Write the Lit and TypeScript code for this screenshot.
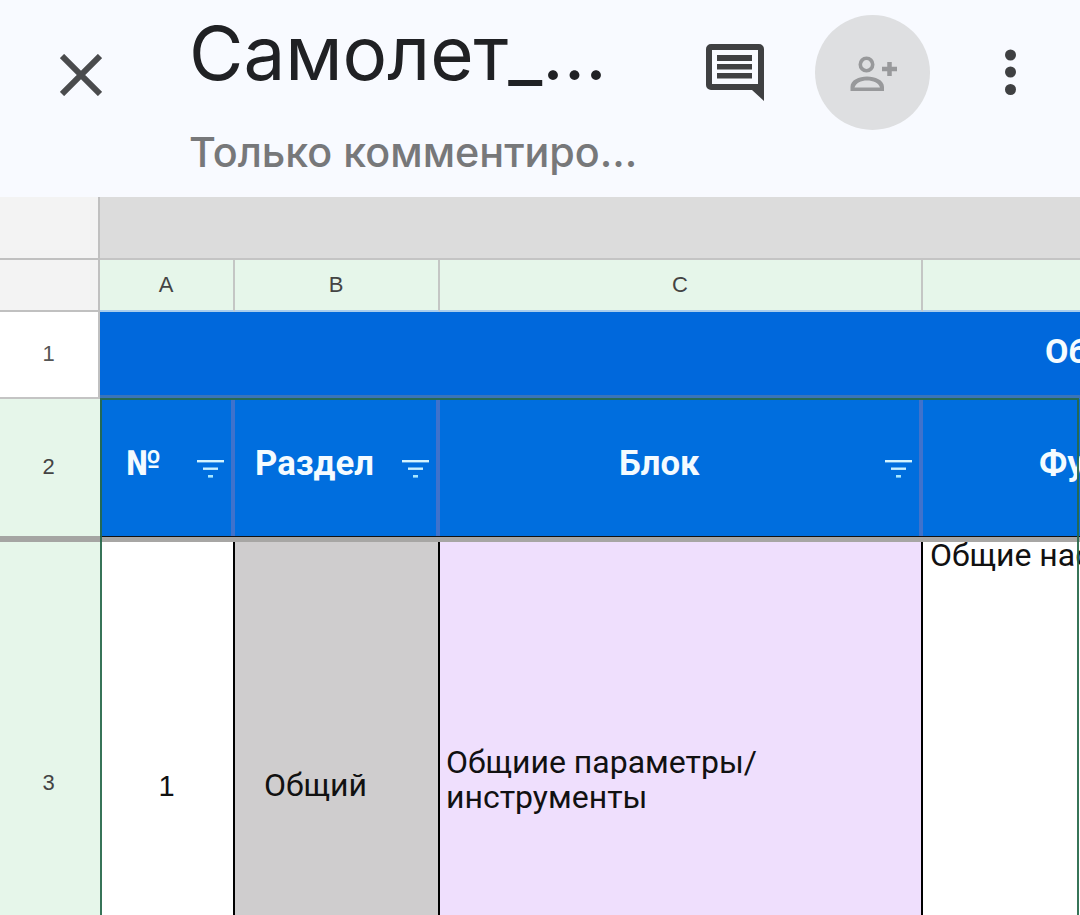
import { LitElement, html, css } from "lit";
import { customElement } from "lit/decorators.js";

const filterIcon = html`<svg class="filter" width="28" height="20" viewBox="0 0 28 20" aria-hidden="true">
  <rect x="0" y="0" width="27" height="2.4" fill="#d4f4ff"></rect>
  <rect x="6" y="7.5" width="15" height="2.4" fill="#c8f0ff"></rect>
  <rect x="11" y="15" width="5" height="2.6" fill="#a6e6ff"></rect>
</svg>`;

@customElement("app-root")
export class AppRoot extends LitElement {
  static styles = css`
    :host {
      display: block;
      width: 1080px;
      height: 915px;
      overflow: hidden;
      background: #fff;
      font-family: Roboto, "Liberation Sans", sans-serif;
    }
    .top {
      height: 197px;
      background: #f8faff;
      display: flex;
      align-items: flex-start;
      box-sizing: border-box;
    }
    .close {
      margin: 54px 0 0 60px;
      width: 42px;
      height: 42px;
      flex: none;
    }
    .titles {
      margin-left: 87px;
      width: 491px;
      flex: none;
    }
    .title {
      margin-top: 3px;
      font-family: Inter, Roboto, sans-serif;
      font-size: 74.5px;
      line-height: 100px;
      color: #202124;
      white-space: nowrap;
      font-weight: 400;
      height: 100px;
    }
    .sub {
      margin-top: 24px;
      font-family: Inter, Roboto, sans-serif;
      font-size: 41.3px;
      line-height: 50px;
      color: #77787a;
      white-space: nowrap;
      font-weight: 500;
    }
    .comment {
      margin: 44px 0 0 26px;
      flex: none;
    }
    .avatar {
      margin: 15px 0 0 51px;
      width: 115px;
      height: 115px;
      border-radius: 50%;
      background: #dedfe1;
      display: flex;
      align-items: center;
      justify-content: center;
      flex: none;
    }
    .more {
      margin: 49px 0 0 74px;
      flex: none;
    }
    .sheet {
      position: relative;
      display: grid;
      grid-template-columns: 100px 135px 205px 483px 157px;
      grid-template-rows: 63px 52px 87px 137px 6px 373px;
      overflow: hidden;
    }
    .corner {
      background: #f3f3f3;
      border-right: 2px solid #c0c0c0;
      border-bottom: 2px solid #c0c0c0;
      box-sizing: border-box;
    }
    .band {
      grid-column: 2 / -1;
      background: #dcdcdc;
      border-bottom: 2px solid #c4c4c4;
      box-sizing: border-box;
    }
    .col {
      background: #e6f6ea;
      border-right: 2px solid #c4c6c4;
      border-bottom: 2px solid #a9cdec;
      box-sizing: border-box;
      display: flex;
      align-items: center;
      justify-content: center;
      font-family: "Liberation Sans", Arial, sans-serif;
      font-size: 22px;
      color: #444;
      padding-right: 1px;
    }
    .col.last {
      border-right: 0;
    }
    .rowh {
      display: flex;
      align-items: center;
      justify-content: center;
      font-family: "Liberation Sans", Arial, sans-serif;
      font-size: 22px;
      color: #444;
      box-sizing: border-box;
      background: #e6f6ea;
      padding: 0 3px 2px 0;
    }
    .rowh.one {
      background: #fff;
      border-bottom: 2px solid #c4c4c4;
      border-right: 2px solid #c0c0c0;
      padding: 0 1px 2px 0;
      color: #555;
    }
    .rowh.three {
      align-items: flex-start;
      padding-top: 228px;
    }
    .banner {
      grid-column: 2 / -1;
      background: #0068dc;
      border-bottom: 4px solid #3a74b8;
      box-sizing: border-box;
      color: #f4fbff;
      font-size: 34px;
      font-weight: 700;
      line-height: 78px;
      padding-left: 945px;
      white-space: nowrap;
      overflow: hidden;
    }
    .hcell {
      background: #006ede;
      border-right: 4px solid #3f72cc;
      box-sizing: border-box;
      position: relative;
      color: #f4fbff;
      font-family: Roboto, "Liberation Sans", sans-serif;
      font-weight: 700;
      font-size: 34.7px;
      line-height: 40px;
      white-space: nowrap;
      overflow: hidden;
      padding-top: 44px;
    }
    .hcell.last {
      border-right: 0;
    }
    .hcell .filter {
      position: absolute;
      top: 61px;
      right: 6px;
    }
    .pad-a { padding-left: 26px; }
    .pad-b { padding-left: 20px; }
    .pad-c { padding-left: 179px; }
    .pad-d { padding-left: 116px; }
    .strip {
      background: #a7a6a4;
      border-top: 1px solid #111;
      box-sizing: border-box;
    }
    .strip.h {
      border-top: 0;
      background: #a5a5a3;
    }
    .cell {
      box-sizing: border-box;
      border-right: 2px solid #000;
      font-family: Roboto, "Liberation Sans", sans-serif;
      font-size: 32px;
      line-height: 36px;
      color: #111;
      white-space: nowrap;
      overflow: hidden;
    }
    .c-a {
      background: #fff;
      padding-top: 226px;
      text-align: center;
      font-family: "Liberation Sans", Arial, sans-serif;
      font-size: 29px;
    }
    .c-b {
      background: #cfcdce;
      padding: 225px 0 0 29px;
    }
    .c-c {
      background: #efdffd;
      padding: 203px 0 0 6px;
      line-height: 35px;
    }
    .c-d {
      background: #fff;
      padding: 0 0 0 7px;
      border-right: 0;
      line-height: 27px;
    }
    .selection {
      position: absolute;
      left: 100px;
      top: 201px;
      width: 979px;
      height: 600px;
      box-sizing: border-box;
      border: 2.5px solid rgba(38, 104, 74, 0.92);
      pointer-events: none;
    }
  `;

  render() {
    return html`
      <div class="top">
        <svg class="close" viewBox="0 0 42 42" aria-hidden="true">
          <path d="M2 2 L40 40 M40 2 L2 40" stroke="#4a4b4d" stroke-width="6" fill="none"></path>
        </svg>
        <div class="titles">
          <div class="title">Самолет_...</div>
          <div class="sub">Только комментиро...</div>
        </div>
        <svg class="comment" width="58" height="58" viewBox="0 0 58 58" aria-hidden="true">
          <path fill-rule="evenodd" fill="#3f4042" d="M5 0 H53 a5 5 0 0 1 5 5 V57 L46 46 H5 a5 5 0 0 1 -5 -5 V5 a5 5 0 0 1 5 -5 Z M6 6 V40 H52 V6 Z"></path>
          <rect x="11" y="11" width="35" height="6" fill="#3f4042"></rect>
          <rect x="11" y="20" width="35" height="5.5" fill="#3f4042"></rect>
          <rect x="11" y="29" width="35" height="5.5" fill="#3f4042"></rect>
        </svg>
        <div class="avatar">
          <svg width="48" height="38" viewBox="0 0 48 38" aria-hidden="true">
            <circle cx="17.5" cy="10.5" r="6.2" fill="none" stroke="#98999b" stroke-width="3.6"></circle>
            <path fill-rule="evenodd" fill="#98999b" d="M1.5 37 V33 C1.5 26 10 22.5 18 22.5 C26 22.5 35 26 35 33 V37 Z M5.5 33.5 H31 C30 29 24 26.5 18 26.5 C12 26.5 7 29 5.5 33.5 Z"></path>
            <path d="M40.5 8 V22 M33 15 H48" stroke="#98999b" stroke-width="4.5" fill="none"></path>
          </svg>
        </div>
        <svg class="more" width="13" height="48" viewBox="0 0 13 48" aria-hidden="true">
          <circle cx="6.5" cy="6" r="5.5" fill="#3f4042"></circle>
          <circle cx="6.5" cy="23" r="5.5" fill="#3f4042"></circle>
          <circle cx="6.5" cy="40.5" r="5.5" fill="#3f4042"></circle>
        </svg>
      </div>

      <div class="sheet">
        <div class="corner"></div>
        <div class="band"></div>

        <div class="corner"></div>
        <div class="col">A</div>
        <div class="col">B</div>
        <div class="col">C</div>
        <div class="col last"></div>

        <div class="rowh one">1</div>
        <div class="banner">Общие</div>

        <div class="rowh">2</div>
        <div class="hcell pad-a">№${filterIcon}</div>
        <div class="hcell pad-b">Раздел${filterIcon}</div>
        <div class="hcell pad-c">Блок${filterIcon}</div>
        <div class="hcell last pad-d">Функция</div>

        <div class="strip h"></div>
        <div class="strip"></div>
        <div class="strip"></div>
        <div class="strip"></div>
        <div class="strip"></div>

        <div class="rowh three">3</div>
        <div class="cell c-a">1</div>
        <div class="cell c-b">Общий</div>
        <div class="cell c-c">Общиие параметры/<br />инструменты</div>
        <div class="cell c-d">Общие настройки</div>

        <div class="selection"></div>
      </div>
    `;
  }
}
